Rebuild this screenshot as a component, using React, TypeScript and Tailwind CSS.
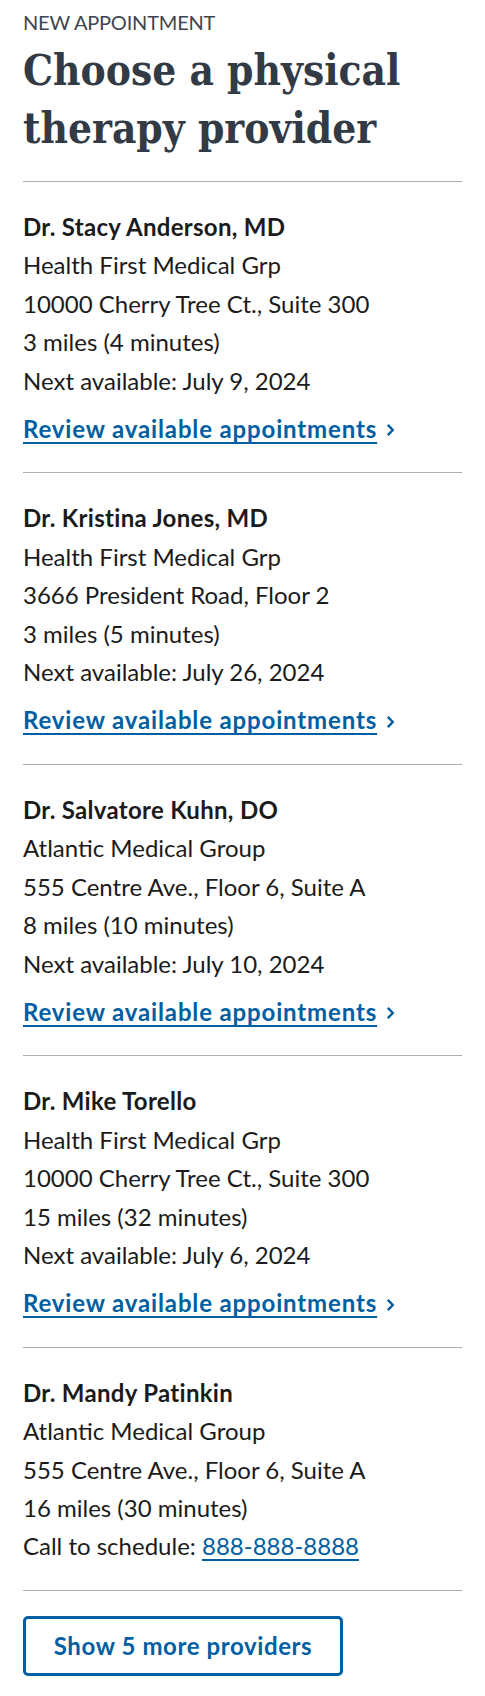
import React from 'react';

type Provider = {
    name: string;
    group: string;
    address: string;
    distance: string;
    next?: string;
    phone?: string;
};

const PROVIDERS: Provider[] = [
    {
        name: 'Dr. Stacy Anderson, MD',
        group: 'Health First Medical Grp',
        address: '10000 Cherry Tree Ct., Suite 300',
        distance: '3 miles (4 minutes)',
        next: 'July 9, 2024',
    },
    {
        name: 'Dr. Kristina Jones, MD',
        group: 'Health First Medical Grp',
        address: '3666 President Road, Floor 2',
        distance: '3 miles (5 minutes)',
        next: 'July 26, 2024',
    },
    {
        name: 'Dr. Salvatore Kuhn, DO',
        group: 'Atlantic Medical Group',
        address: '555 Centre Ave., Floor 6, Suite A',
        distance: '8 miles (10 minutes)',
        next: 'July 10, 2024',
    },
    {
        name: 'Dr. Mike Torello',
        group: 'Health First Medical Grp',
        address: '10000 Cherry Tree Ct., Suite 300',
        distance: '15 miles (32 minutes)',
        next: 'July 6, 2024',
    },
    {
        name: 'Dr. Mandy Patinkin',
        group: 'Atlantic Medical Group',
        address: '555 Centre Ave., Floor 6, Suite A',
        distance: '16 miles (30 minutes)',
        phone: '888-888-8888',
    },
];

const ProviderCard: React.FC<{ provider: Provider }> = ({ provider }) => {
    return (
        <li className="border-b border-[#a9aeb1] pt-[26px] pb-6 text-[24px] leading-[38.4px] text-[#1b1b1b]">
            <p className="font-bold tracking-[0.3px]">{provider.name}</p>
            <p>{provider.group}</p>
            <p>{provider.address}</p>
            <p>{provider.distance}</p>
            {provider.next ? (
                <>
                    <p>Next available: {provider.next}</p>
                    <div className="mt-[10px] flex items-center gap-[9px]">
                        <a
                            href="#"
                            className="font-bold tracking-[0.85px] text-[#005ea2] underline decoration-[1.5px] underline-offset-[4px]"
                        >
                            Review available appointments
                        </a>
                        {/* chevron */}
                        <svg width="9" height="14" viewBox="0 0 9 14" className="mt-[2px] text-[#005ea2]">
                            <path d="M1.8 1.8 L6.8 7 L1.8 12.2" fill="none" stroke="currentColor" strokeWidth="2.4" />
                        </svg>
                    </div>
                </>
            ) : (
                <p>
                    Call to schedule:{' '}
                    <a href="#" className="text-[#005ea2] underline underline-offset-[4px]">
                        {provider.phone}
                    </a>
                </p>
            )}
        </li>
    );
};

export default function App() {
    return (
        <div className="min-h-[1696px] w-full bg-white px-[23px] pt-[4px] font-['Lato','Noto_Sans',sans-serif]">
            <p className="text-[20px] leading-[36px] uppercase tracking-[-0.2px] text-[#3d4551]">New appointment</p>
            <h1 className="mt-[2px] pb-[23px] font-['DejaVu_Serif',serif] font-stretch-condensed text-[42px] leading-[58px] font-bold text-[#323a45]">
                Choose a physical therapy provider
            </h1>
            <ul className="border-t border-[#a9aeb1]">
                {PROVIDERS.map((p) => (
                    <ProviderCard key={p.name} provider={p} />
                ))}
            </ul>
            <button className="mt-[25px] h-[60px] w-[320px] rounded-[5px] border-[3px] border-[#005ea2] bg-white text-[24px] font-bold tracking-[0.6px] text-[#005ea2]">
                Show 5 more providers
            </button>
        </div>
    );
}
